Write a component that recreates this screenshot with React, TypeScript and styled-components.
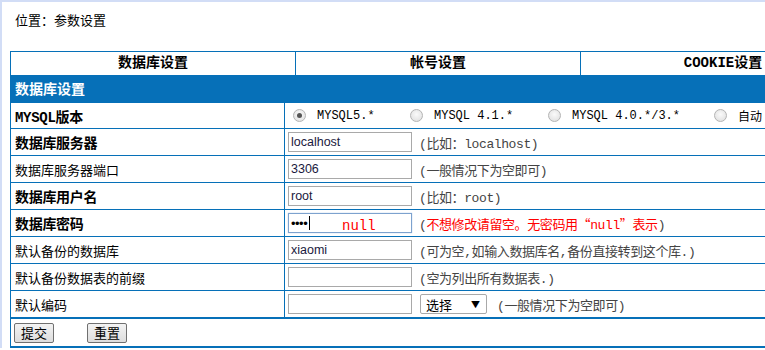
import styled, { createGlobalStyle } from "styled-components";

const BLUE = "#0670b8";

const GlobalStyle = createGlobalStyle`
  html, body {
    margin: 0;
    padding: 0;
    background: #fff;
    overflow: hidden;
  }
  body {
    font-family: "Noto Sans CJK SC", "Liberation Sans", sans-serif;
    font-size: 13px;
    color: #000;
  }
`;

const Frame = styled.div`
  border-top: 2px solid #d2ddf6;
  border-left: 2px solid #d2ddf6;
  height: 348px;
  box-sizing: border-box;
`;

const Location = styled.div`
  padding: 10px 0 0 13px;
  line-height: 16px;
  font-size: 13px;
`;

const Panel = styled.div`
  margin: 23px 0 0 8px;
  width: 855px;
  border: 1px solid ${BLUE};
  border-right: none;
`;

const Tabs = styled.div`
  display: grid;
  grid-template-columns: repeat(3, 285px);
`;

const Tab = styled.div`
  height: 23px;
  line-height: 23px;
  text-align: center;
  font-weight: 700;
  font-size: 14px;
  border-right: 1px solid ${BLUE};
  font-family: "Liberation Mono", "Noto Sans CJK SC", monospace;
  &:first-child {
    width: 284px;
  }
`;

const SectionBar = styled.div`
  height: 27px;
  line-height: 27px;
  background: ${BLUE};
  color: #fff;
  font-weight: 700;
  font-size: 14px;
  padding-left: 4px;
`;

const Row = styled.div<{ $tall?: boolean }>`
  display: grid;
  grid-template-columns: 274px 1fr;
  height: ${(p) => (p.$tall ? 26 : 27)}px;
  border-top: 1px solid ${BLUE};
  box-sizing: border-box;
`;

const Label = styled.div<{ $bold?: boolean }>`
  display: flex;
  align-items: center;
  padding-left: 4px;
  border-right: 1px solid ${BLUE};
  font-family: "Liberation Mono", "Noto Sans CJK SC", monospace;
  font-size: ${(p) => (p.$bold ? 14 : 13)}px;
  font-weight: ${(p) => (p.$bold ? 700 : 400)};
  letter-spacing: ${(p) => (p.$bold ? "-0.3px" : "0")};
`;

const Field = styled.div`
  display: flex;
  align-items: center;
  padding-left: 3px;
  position: relative;
`;

const TextInput = styled.input<{ $focus?: boolean }>`
  width: 124px;
  height: 20px;
  box-sizing: border-box;
  border: 1px solid ${(p) => (p.$focus ? "#7da2ce" : "#a9a9a9")};
  box-shadow: ${(p) => (p.$focus ? "0 0 1px #9bbbe4" : "none")};
  padding: 0 2px;
  font-family: "Liberation Sans", Arial, sans-serif;
  font-size: 12.5px;
  color: #1a1a40;
  outline: none;
  &[type="password"] {
    font-size: 13px;
    letter-spacing: -0.5px;
    color: #000;
  }
`;

const Hint = styled.span<{ $gap?: number }>`
  margin-left: ${(p) => p.$gap ?? 7}px;
  color: #444;
  font-family: "Liberation Mono", "Noto Sans CJK SC", monospace;
  font-size: 13px;
  letter-spacing: -0.4px;
  white-space: nowrap;
`;

const Warn = styled.span`
  color: #f00;
`;

const Quote = styled.span`
  font-family: "Noto Sans CJK SC", sans-serif;
`;

// red "null" hint that sits over the password box
const NullMark = styled.span`
  position: absolute;
  left: 57px;
  top: 8px;
  color: #f00;
  font-family: "Liberation Mono", monospace;
  font-size: 14px;
  line-height: 16px;
`;

const Caret = styled.span`
  position: absolute;
  left: 24px;
  top: 6px;
  width: 1px;
  height: 14px;
  background: #000;
`;

const RadioGroup = styled.div`
  display: flex;
  align-items: center;
  padding-left: 8px;
`;

const RadioOption = styled.label<{ $w?: number }>`
  display: flex;
  align-items: center;
  width: ${(p) => (p.$w ? `${p.$w}px` : "auto")};
  font-family: "Liberation Mono", "Noto Sans CJK SC", monospace;
  font-size: 12px;
  white-space: nowrap;
`;

const RadioMark = styled.span<{ $checked?: boolean }>`
  width: 11px;
  height: 11px;
  border-radius: 50%;
  border: 1px solid #b4b4b4;
  background: radial-gradient(circle at 50% 40%, #fafafa, #dcdcdc);
  margin-right: 11px;
  position: relative;
  flex: none;
  &::after {
    content: "";
    display: ${(p) => (p.$checked ? "block" : "none")};
    position: absolute;
    left: 3px;
    top: 3px;
    width: 5px;
    height: 5px;
    border-radius: 50%;
    background: #555;
  }
`;

const SelectBox = styled.div`
  margin-left: 8px;
  width: 67px;
  height: 20px;
  box-sizing: border-box;
  border: 1px solid #a9a9a9;
  border-radius: 2px;
  display: flex;
  align-items: center;
  justify-content: space-between;
  padding: 0 6px 0 5px;
  font-size: 13px;
  span {
    font-size: 9px;
  }
`;

const Footer = styled.div`
  border-top: 2px solid ${BLUE};
  border-bottom: 1px solid ${BLUE};
  height: 27px;
  display: flex;
  align-items: center;
  gap: 33px;
  padding-left: 3px;
`;

const Button = styled.button`
  width: 40px;
  height: 20px;
  padding: 0;
  border: 1px solid #707070;
  border-radius: 2px;
  background: linear-gradient(#f3f3f3, #dddddd);
  font-family: "Noto Sans CJK SC", sans-serif;
  font-size: 13px;
  color: #000;
  line-height: 18px;
`;

export default function App() {
  return (
    <Frame>
      <GlobalStyle />
      <Location>位置：参数设置</Location>
      <Panel>
        <Tabs>
          <Tab>数据库设置</Tab>
          <Tab>帐号设置</Tab>
          <Tab>COOKIE设置</Tab>
        </Tabs>
        <SectionBar>数据库设置</SectionBar>

        <Row $tall>
          <Label $bold>MYSQL版本</Label>
          <RadioGroup>
            <RadioOption $w={117}>
              <RadioMark $checked />
              MYSQL5.*
            </RadioOption>
            <RadioOption $w={138}>
              <RadioMark />
              MYSQL 4.1.*
            </RadioOption>
            <RadioOption $w={166}>
              <RadioMark />
              MYSQL 4.0.*/3.*
            </RadioOption>
            <RadioOption>
              <RadioMark />
              自动
            </RadioOption>
          </RadioGroup>
        </Row>

        <Row>
          <Label $bold>数据库服务器</Label>
          <Field>
            <TextInput defaultValue="localhost" />
            <Hint>(比如：localhost)</Hint>
          </Field>
        </Row>

        <Row>
          <Label>数据库服务器端口</Label>
          <Field>
            <TextInput defaultValue="3306" />
            <Hint>(一般情况下为空即可)</Hint>
          </Field>
        </Row>

        <Row>
          <Label $bold>数据库用户名</Label>
          <Field>
            <TextInput defaultValue="root" />
            <Hint>(比如：root)</Hint>
          </Field>
        </Row>

        <Row>
          <Label $bold>数据库密码</Label>
          <Field>
            <TextInput type="password" defaultValue="abcd" $focus />
            <Caret />
            <NullMark>null</NullMark>
            <Hint>
              (
              <Warn>
                不想修改请留空。无密码用<Quote>“</Quote>null<Quote>”</Quote>表示
              </Warn>
              )
            </Hint>
          </Field>
        </Row>

        <Row>
          <Label>默认备份的数据库</Label>
          <Field>
            <TextInput defaultValue="xiaomi" />
            <Hint>(可为空,如输入数据库名,备份直接转到这个库.)</Hint>
          </Field>
        </Row>

        <Row>
          <Label>默认备份数据表的前缀</Label>
          <Field>
            <TextInput defaultValue="" />
            <Hint>(空为列出所有数据表.)</Hint>
          </Field>
        </Row>

        <Row>
          <Label>默认编码</Label>
          <Field>
            <TextInput defaultValue="" />
            <SelectBox>
              选择<span>▼</span>
            </SelectBox>
            <Hint $gap={10}>(一般情况下为空即可)</Hint>
          </Field>
        </Row>

        <Footer>
          <Button>提交</Button>
          <Button>重置</Button>
        </Footer>
      </Panel>
    </Frame>
  );
}
